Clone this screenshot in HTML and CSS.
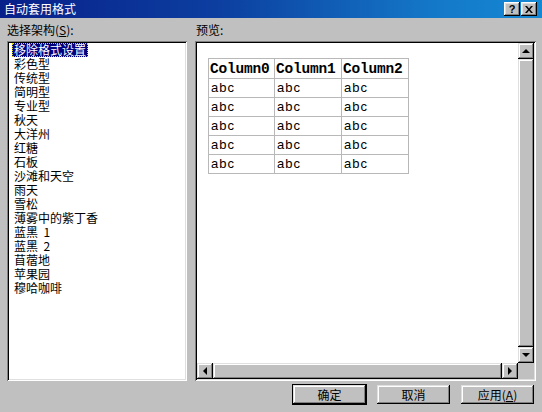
FILE: index.html
```html
<!DOCTYPE html>
<html lang="zh">
<head>
<meta charset="utf-8">
<title>自动套用格式</title>
<link rel="stylesheet" href="styles.css">
</head>
<body>
<div class="window">
  <div class="titlebar">
    <span class="title">自动套用格式</span>
    <div class="tbtns">
      <span class="tbtn help">?</span>
      <span class="tbtn close"><svg width="8" height="7" viewBox="0 0 8 7"><path d="M0 0h2l2 2.5L6 0h2L5 3.5 8 7H6L4 4.5 2 7H0l3-3.5z" fill="#000"/></svg></span>
    </div>
  </div>
  <div class="main">
    <div class="col left">
      <div class="label">选择架构(<u>S</u>):</div>
      <div class="listbox sunken">
        <div class="item sel">移除格式设置</div>
        <div class="item">彩色型</div>
        <div class="item">传统型</div>
        <div class="item">简明型</div>
        <div class="item">专业型</div>
        <div class="item">秋天</div>
        <div class="item">大洋州</div>
        <div class="item">红糖</div>
        <div class="item">石板</div>
        <div class="item">沙滩和天空</div>
        <div class="item">雨天</div>
        <div class="item">雪松</div>
        <div class="item">薄雾中的紫丁香</div>
        <div class="item">蓝黑  1</div>
        <div class="item">蓝黑  2</div>
        <div class="item">苜蓿地</div>
        <div class="item">苹果园</div>
        <div class="item">穆哈咖啡</div>
      </div>
    </div>
    <div class="col right">
      <div class="label">预览:</div>
      <div class="pane sunken">
        <div class="view">
          <table class="preview">
            <colgroup><col class="c0"><col class="c1"><col class="c2"></colgroup>
            <tr class="head"><th>Column0</th><th>Column1</th><th>Column2</th></tr>
            <tr><td>abc</td><td>abc</td><td>abc</td></tr>
            <tr><td>abc</td><td>abc</td><td>abc</td></tr>
            <tr><td>abc</td><td>abc</td><td>abc</td></tr>
            <tr><td>abc</td><td>abc</td><td>abc</td></tr>
            <tr><td>abc</td><td>abc</td><td>abc</td></tr>
          </table>
        </div>
        <div class="vscroll">
          <div class="sbtn raised"><span class="arr up"></span></div>
          <div class="thumb raised"></div>
          <div class="sbtn raised"><span class="arr down"></span></div>
        </div>
        <div class="hscroll">
          <div class="sbtn raised"><span class="arr lft"></span></div>
          <div class="thumb raised"></div>
          <div class="sbtn raised"><span class="arr rgt"></span></div>
        </div>
        <div class="corner"></div>
      </div>
    </div>
  </div>
  <div class="buttons">
    <div class="btn default"><div class="btn-in raised">确定</div></div>
    <div class="btn"><div class="btn-in raised">取消</div></div>
    <div class="btn"><div class="btn-in raised">应用(<u>A</u>)</div></div>
  </div>
</div>
</body>
</html>
```
FILE: styles.css
```css
html, body {
  margin: 0;
  padding: 0;
}
body {
  font-family: "Noto Sans CJK SC", "Liberation Sans", sans-serif;
  font-size: 12px;
  color: #000;
  background: #c0c0c0;
}
.window {
  width: 542px;
  height: 412px;
  background: #c0c0c0;
  display: flex;
  flex-direction: column;
  overflow: hidden;
}
.titlebar {
  height: 18px;
  flex: none;
  background: linear-gradient(to right, #08208a 0%, #0c3ea0 40%, #1478c8 80%, #1488d4 100%);
  display: flex;
  align-items: center;
  justify-content: space-between;
  padding: 0 5px 0 4px;
}
.title {
  color: #fff;
  font-size: 12px;
  line-height: 14px;
}
.tbtns {
  display: flex;
  gap: 1px;
  align-items: center;
}
.tbtn {
  width: 16px;
  height: 14px;
  box-sizing: border-box;
  background: #c0c0c0;
  box-shadow: inset -1px -1px #000, inset 1px 1px #fff, inset -2px -2px #808080, inset 2px 2px #dfdfdf;
  display: flex;
  align-items: center;
  justify-content: center;
}
.help {
  font-family: "Liberation Sans", sans-serif;
  font-weight: bold;
  font-size: 11px;
  line-height: 12px;
}
.raised {
  background: #c0c0c0;
  box-shadow: inset -1px -1px #000, inset 1px 1px #dfdfdf, inset -2px -2px #808080, inset 2px 2px #fff;
}
.sunken {
  box-shadow: inset 1px 1px #808080, inset -1px -1px #fff, inset 2px 2px #000, inset -2px -2px #dfdfdf;
}
.main {
  display: flex;
  gap: 8px;
  padding: 5px 0 0 7px;
}
.col {
  display: flex;
  flex-direction: column;
}
.left { width: 180px; }
.right { width: 341px; }
.label {
  height: 18px;
  line-height: 14px;
}
.right .label { padding-left: 1px; }
.listbox {
  height: 340px;
  box-sizing: border-box;
  background: #fff;
  padding: 2px 2px 2px 5px;
}
.item {
  width: fit-content;
  line-height: 14px;
  height: 14px;
  padding: 0 2px;
  white-space: pre;
}
.item.sel {
  background: #000080;
  color: #fff;
  outline: 1px dotted #e0e000;
  outline-offset: -1px;
}
.pane {
  height: 340px;
  box-sizing: border-box;
  padding: 2px;
  display: grid;
  grid-template-columns: 1fr 16px;
  grid-template-rows: 1fr 16px;
}
.view {
  background: #fff;
  padding: 15px 0 0 11px;
  overflow: hidden;
}
.preview {
  border-collapse: collapse;
  border: 1px solid #a0a0a0;
  table-layout: fixed;
  width: 200px;
}
.c0 { width: 66px; }
.c1 { width: 67px; }
.c2 { width: 67px; }
.preview th, .preview td {
  border: 1px solid #b8b8b8;
  padding: 0 0 0 2px;
  text-align: left;
  vertical-align: middle;
  overflow: hidden;
  white-space: nowrap;
}
.preview th {
  font-family: "Liberation Mono", monospace;
  font-weight: bold;
  font-size: 14.5px;
  height: 19px;
  padding: 0 0 0 1px;
  letter-spacing: -0.2px;
}
.preview td {
  font-family: "Liberation Sans", sans-serif;
  font-size: 13px;
  letter-spacing: 1px;
  height: 18px;
  line-height: 14px;
}
.vscroll {
  display: flex;
  flex-direction: column;
  background: #c0c0c0;
}
.hscroll {
  display: flex;
  background: #c0c0c0;
}
.sbtn {
  width: 16px;
  height: 16px;
  flex: none;
  display: flex;
  align-items: center;
  justify-content: center;
}
.thumb { flex: 1; }
.corner { background: #c0c0c0; }
.arr {
  width: 0;
  height: 0;
  border-style: solid;
  border-color: transparent;
}
.arr.up { border-width: 0 4px 4px 4px; border-bottom-color: #000; margin-top: -1px; }
.arr.down { border-width: 4px 4px 0 4px; border-top-color: #000; }
.arr.lft { border-width: 4px 4px 4px 0; border-right-color: #000; margin-left: -1px; }
.arr.rgt { border-width: 4px 0 4px 4px; border-left-color: #000; }
.buttons {
  display: flex;
  justify-content: flex-end;
  gap: 9px;
  padding: 3px 7px 0 0;
}
.btn {
  width: 75px;
  height: 21px;
  box-sizing: border-box;
  padding: 1px;
}
.btn.default {
  padding: 0;
  border: 1px solid #000;
}
.btn-in {
  height: 100%;
  display: flex;
  align-items: center;
  justify-content: center;
  line-height: 14px;
}
```
